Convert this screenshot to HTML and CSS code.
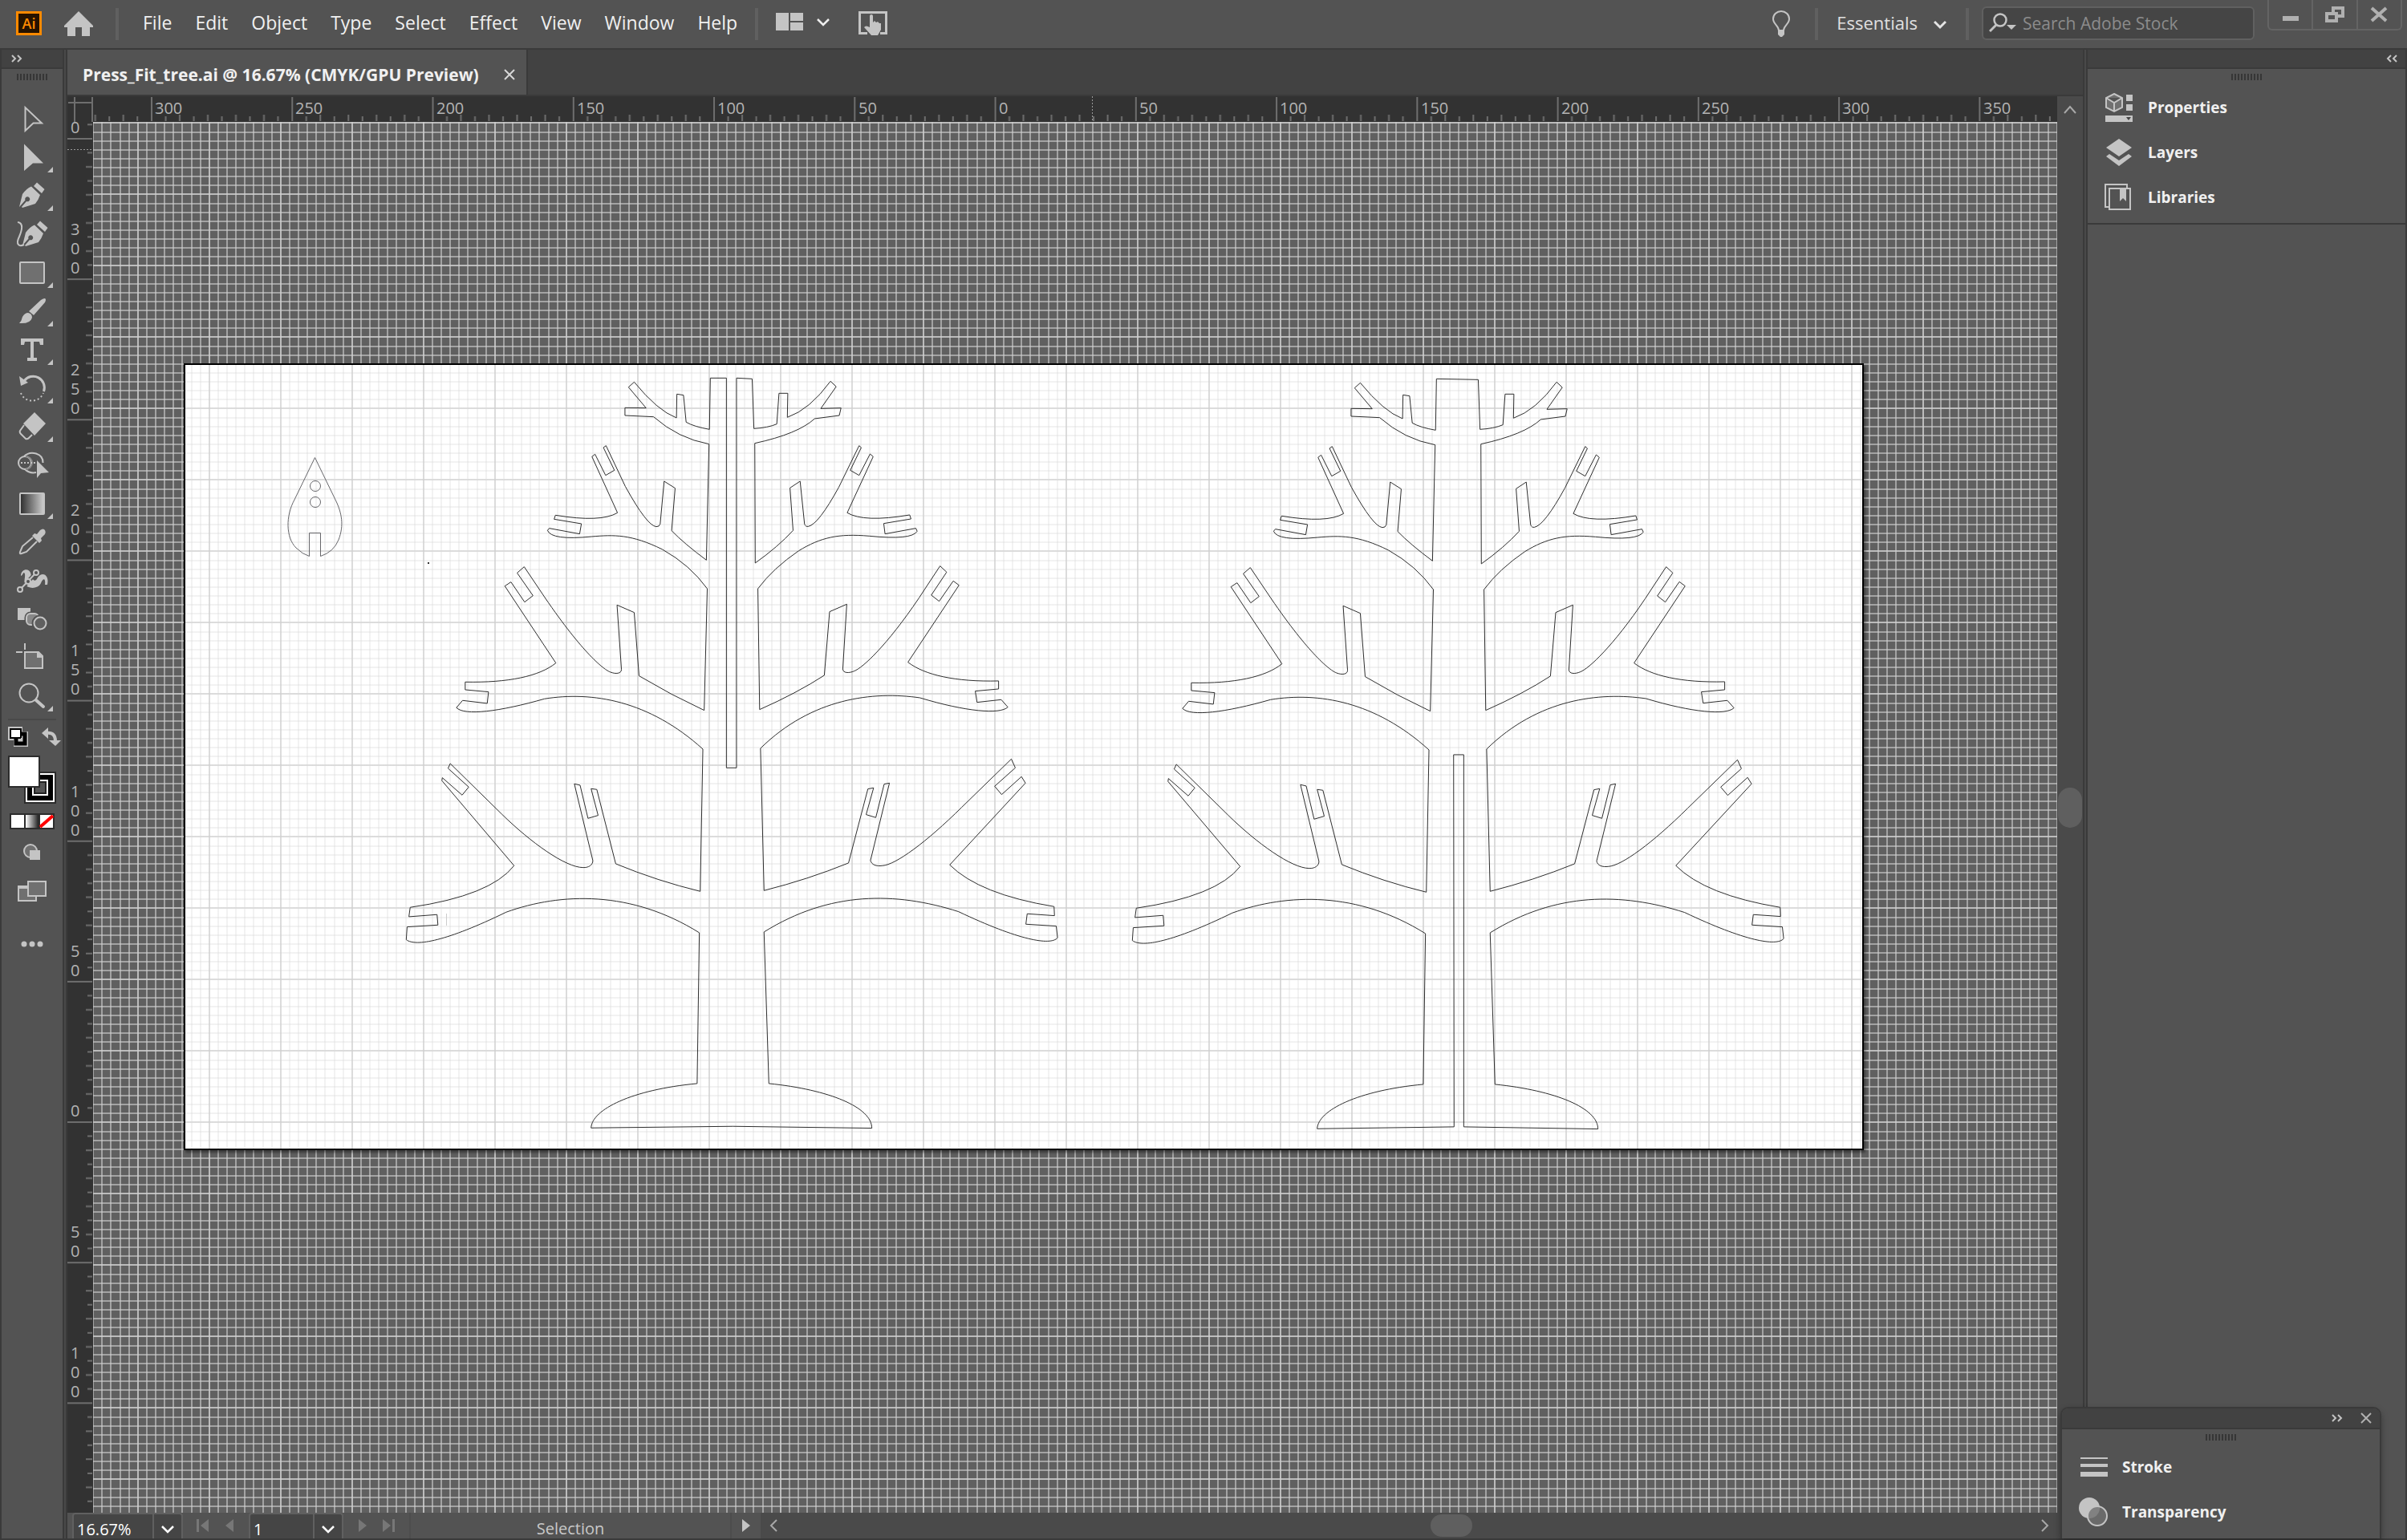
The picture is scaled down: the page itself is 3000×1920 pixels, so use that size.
FILE: index.html
```html
<!DOCTYPE html>
<html lang="en">
<head>
<meta charset="utf-8">
<title>Press_Fit_tree.ai</title>
<link rel="stylesheet" href="styles.css">
</head>
<body>
<header class="appbar">
  <div class="logo">Ai</div>
  <button class="plain home" aria-label="Home"><svg width="36" height="32" viewBox="0 0 36 32"><path fill="#c4c4c4" d="M18 0 36 18V20H32V31H22V20H14V31H4V20H0V18Z"/></svg></button>
  <span class="divider"></span>
  <nav class="menu">
    <button class="plain">File</button><button class="plain">Edit</button><button class="plain">Object</button><button class="plain">Type</button><button class="plain">Select</button><button class="plain">Effect</button><button class="plain">View</button><button class="plain">Window</button><button class="plain">Help</button>
  </nav>
  <span class="divider"></span>
  <button class="plain arrange" aria-label="Arrange documents"><svg width="68" height="24" viewBox="0 0 68 24"><path fill="#c4c4c4" d="M0 1H16V23H0ZM18 1H34V11H18ZM18 13H34V23H18Z"/><path fill="none" stroke="#eee" stroke-width="2.500" d="M52 9 59 16 66 9"/></svg></button>
  <button class="plain touch" aria-label="Touch workspace"><svg width="36" height="32" viewBox="0 0 36 32"><path fill="none" stroke="#c4c4c4" stroke-width="3" d="M11 27.500H1.500V1.500H34.500V27.500H27"/><path fill="#c4c4c4" d="M14 6Q14 4 16 4T18 6V14L20 12 22 14 24 13 26 15 28 15V23L24 30H16L7 20Q9 17 14 20Z"/></svg></button>
  <span class="spacer"></span>
  <button class="plain learn" aria-label="Learn"><svg width="24" height="34" viewBox="0 0 24 34"><path fill="none" stroke="#c4c4c4" stroke-width="2" d="M9 25C9 19 2 17 2 10.500A10 9.500 0 0 1 22 10.500C22 17 15 19 15 25Z"/><path fill="#c4c4c4" d="M8 24H16V30L13 33H11L8 30Z"/></svg></button>
  <span class="divider"></span>
  <button class="plain workspace">Essentials<svg width="16" height="12" viewBox="0 0 16 12"><path fill="none" stroke="#e4e4e4" stroke-width="3" d="M1 2 8 9 15 2"/></svg></button>
  <span class="divider"></span>
  <label class="search">
    <svg width="34" height="26" viewBox="0 0 34 26"><circle cx="14" cy="9" r="7.500" fill="none" stroke="#c4c4c4" stroke-width="2.500"/><path d="M9 15 1 23" stroke="#c4c4c4" stroke-width="3"/><path fill="#c4c4c4" d="M22 15H34L28 21Z"/></svg>
    <input type="text" placeholder="Search Adobe Stock" aria-label="Search Adobe Stock">
  </label>
  <div class="winbtns">
    <button class="plain" aria-label="Minimize"><svg width="24" height="20" viewBox="0 0 24 20"><path fill="#b0b0b0" d="M2 12H22V18H2Z"/></svg></button>
    <button class="plain" aria-label="Restore"><svg width="24" height="20" viewBox="0 0 24 20"><path fill="none" stroke="#b0b0b0" stroke-width="4" d="M2 9H14V18H2ZM10 8V2H22V12H15"/></svg></button>
    <button class="plain" aria-label="Close"><svg width="24" height="20" viewBox="0 0 24 20"><path fill="none" stroke="#b0b0b0" stroke-width="4" d="M3 2 21 18M21 2 3 18"/></svg></button>
  </div>
</header>

<div class="work">
  <aside class="toolbar">
    <button class="plain dockhead" aria-label="Expand toolbar"><svg width="14" height="10" viewBox="0 0 14 10"><path fill="none" stroke="#c4c4c4" stroke-width="2" d="M1 1 5 5 1 9M8 1 12 5 8 9"/></svg></button>
    <div class="tools">
      <span class="grip"></span>
      <div class="toollist">
      <button class="plain tool" aria-label="Selection"><svg viewBox="0 0 76 48"><path fill="none" stroke="#c4c4c4" stroke-width="2" d="M29.500 10V39L39.500 29.500H50Z"/></svg></button>
      <button class="plain tool" aria-label="Direct selection"><svg viewBox="0 0 76 48"><path class="f" d="M28 7.500V41L39 31.500H52ZM64 36V43H57Z"/></svg></button>
      <button class="plain tool" aria-label="Pen"><svg viewBox="0 0 76 48"><path class="f" d="M22 38 26 22Q31 15 37 12.500L48 23Q46 29 42 34L26 39 25 38 31 31A3 3 0 1 0 29.500 29.500L23 37ZM40 12 44 7.500 53.500 16 50 21ZM64 36V43H57Z"/></svg></button>
      <button class="plain tool" aria-label="Curvature"><svg viewBox="0 0 76 48"><path class="f" d="M26 38 30 22Q35 15 41 12.500L52 23Q50 29 46 34L30 39 29 38 35 31A3 3 0 1 0 33.500 29.500L27 37ZM44 12 48 7.500 57.500 16 54 21Z"/><path fill="none" stroke="#c4c4c4" stroke-width="2" d="M20 9C28 10 25 20 22 27 17 37 22 40 28 37"/></svg></button>
      <button class="plain tool" aria-label="Rectangle"><svg viewBox="0 0 76 48"><rect x="23" y="11" width="30" height="26" rx="1" fill="#707070" stroke="#c4c4c4" stroke-width="2"/><path class="f" d="M64 36V43H57Z"/></svg></button>
      <button class="plain tool" aria-label="Paintbrush"><svg viewBox="0 0 76 48"><path class="f" d="M54 8Q56 9 54 13L40 29 34 24 49 10Q52 8 54 8ZM33 26Q38 27 38 32 36 40 22 39 25 36 26 31 29 26 33 26ZM64 36V43H57Z"/></svg></button>
      <button class="plain tool" aria-label="Type"><svg viewBox="0 0 76 48"><path class="f" d="M24 10H52V18H48L47 14H40V34H44V38H32V34H36V14H29L28 18H24ZM64 36V43H57Z"/></svg></button>
      <button class="plain tool" aria-label="Rotate"><svg viewBox="0 0 76 48"><path fill="none" stroke="#c4c4c4" stroke-width="3" d="M28 15A14 14 0 0 1 52.500 28"/><path class="f" d="M22 9 24 21 33 17ZM64 36V43H57Z"/><path fill="none" stroke="#c4c4c4" stroke-width="2" stroke-dasharray="2 3" d="M24 30A15 15 0 0 0 52 30"/></svg></button>
      <button class="plain tool" aria-label="Eraser"><svg viewBox="0 0 76 48"><path class="f" d="M41 6 55 20 41 35 27 20ZM64 36V43H57Z"/><path fill="none" stroke="#c4c4c4" stroke-width="2" d="M28 22 23 29Q22 31 24 33L30 39Q32 40 34 38L38 34"/></svg></button>
      <button class="plain tool" aria-label="Shape builder"><svg viewBox="0 0 76 48"><circle cx="29" cy="21" r="8" fill="none" stroke="#c4c4c4" stroke-width="2"/><path fill="none" stroke="#c4c4c4" stroke-width="2" d="M28 13C36 5 52 9 51.500 21M29 29C33 33 38 34 43 33"/><path fill="none" stroke="#888" stroke-width="2" d="M30 13A8 8 0 0 1 30 29"/><path stroke="#c4c4c4" stroke-width="2" stroke-dasharray="2 2" d="M24 21H42"/><path class="f" d="M44 18V40L49 34 59 33Z"/></svg></button>
      <button class="plain tool" aria-label="Gradient"><svg viewBox="0 0 76 48"><defs><linearGradient id="g1"><stop offset="0" stop-color="#2c2c2c"/><stop offset="1" stop-color="#d0d0d0"/></linearGradient></defs><rect x="23" y="11" width="30" height="26" rx="1" fill="url(#g1)" stroke="#c4c4c4" stroke-width="2"/><path class="f" d="M64 36V43H57Z"/></svg></button>
      <button class="plain tool" aria-label="Eyedropper"><svg viewBox="0 0 76 48"><path class="f" d="M48 9Q52 6 54 9 56 13 52 16L49 19 50 22 47 25 38 16 41 13 44 14Z"/><path fill="none" stroke="#c4c4c4" stroke-width="2" d="M39 18 26 29 23 36Q22 39 25 38L31 36 44 23"/></svg></button>
      <button class="plain tool" aria-label="Puppet warp"><svg viewBox="0 0 76 48"><path class="f" d="M24 18C24 9 34 8 36 14 38 22 41 28 45 20 50 12 60 16 57 29H54C55 21 52 20 49 27 45 35 33 34 29 29 27 25 31 16 28 14 26 14 27 17 24 18Z"/><path stroke="#535353" stroke-width="5" d="M25 34 42 15"/><path stroke="#c4c4c4" stroke-width="2" d="M24 34 42 15"/><g fill="#535353" stroke="#c4c4c4" stroke-width="2"><circle cx="23" cy="35" r="3"/><circle cx="33" cy="25" r="3"/><circle cx="43" cy="14" r="3"/></g></svg></button>
      <button class="plain tool" aria-label="Blend"><svg viewBox="0 0 76 48"><path class="f" d="M20 10H36V25H20Z"/><rect x="31" y="17" width="15" height="14" rx="5" fill="#888" stroke="#535353" stroke-width="5"/><rect x="31" y="17" width="15" height="14" rx="5" fill="#888" stroke="#c4c4c4" stroke-width="2"/><circle cx="48" cy="29" r="8" fill="#707070" stroke="#535353" stroke-width="5"/><circle cx="48" cy="29" r="7.500" fill="#606060" stroke="#c4c4c4" stroke-width="2"/></svg></button>
      <button class="plain tool" aria-label="Artboard"><svg viewBox="0 0 76 48"><path fill="none" stroke="#c4c4c4" stroke-width="2" d="M29 6V14M18 17H26"/><path fill="#707070" stroke="#c4c4c4" stroke-width="2" d="M29 17H46L51 22V37H29Z"/><path class="f" d="M44 16V24H52Z"/></svg></button>
      <button class="plain tool" aria-label="Zoom"><svg viewBox="0 0 76 48"><circle cx="34" cy="20" r="11.500" fill="none" stroke="#c4c4c4" stroke-width="2"/><path stroke="#c4c4c4" stroke-width="4" stroke-linecap="round" d="M43 29 52 37"/><path class="f" d="M64 36V43H57Z"/></svg></button>
      </div>
      <div class="swaprow">
        <button class="plain" aria-label="Default fill and stroke"><svg width="26" height="26" viewBox="0 0 26 26"><path fill="#c4c4c4" d="M0 0H18V6H25V25H7V17H0Z"/><path d="M3 3H16V14H3Z" fill="#fff" stroke="#000" stroke-width="2"/><path d="M17 9H21V21H10V15" fill="none" stroke="#000" stroke-width="5"/><path d="M17 14V17H14" fill="none" stroke="#c4c4c4" stroke-width="2"/></svg></button>
        <button class="plain" aria-label="Swap fill and stroke"><svg width="24" height="24" viewBox="0 0 24 24"><path d="M6 7C14 6 17 10 17 17" fill="none" stroke="#c4c4c4" stroke-width="4"/><path class="f" d="M0 7 8 0V14ZM9 16H24L17 23Z"/></svg></button>
      </div>
      <button class="plain fillstroke" aria-label="Fill and stroke"><svg width="60" height="60" viewBox="0 0 60 60"><path d="M20 20H60V60H20Z" fill="#2c2c2c"/><path d="M23 23H57V57H23Z" fill="#000" stroke="#fff" stroke-width="2"/><path d="M31 31H49V49H31Z" fill="#535353" stroke="#fff" stroke-width="2"/><path d="M33 33H47V47H33Z" fill="#535353" stroke="#222" stroke-width="2"/><path d="M1 1H39V39H1Z" fill="#fff" stroke="#2c2c2c" stroke-width="2"/></svg></button>
      <button class="plain modes" aria-label="Color, gradient, none"><svg width="56" height="20" viewBox="0 0 56 20"><defs><linearGradient id="g2"><stop offset="0" stop-color="#fff"/><stop offset="1" stop-color="#222"/></linearGradient></defs><path fill="#2c2c2c" d="M0 0H56V20H0Z"/><path fill="#fff" d="M2 2H18V18H2ZM38 2H54V18H38Z"/><path fill="url(#g2)" d="M20 2H36V18H20Z"/><path stroke="#f00" stroke-width="4" d="M38 17 54 3"/></svg></button>
      <button class="plain drawmode" aria-label="Draw normal"><svg width="22" height="20" viewBox="0 0 22 20"><circle cx="9" cy="9" r="8" fill="#707070" stroke="#c4c4c4" stroke-width="2"/><path class="f" d="M8 8H21V20H8Z"/></svg></button>
      <button class="plain screenmode" aria-label="Screen mode"><svg width="36" height="26" viewBox="0 0 36 26"><path d="M1 7H23V25H1Z" fill="#707070" stroke="#c4c4c4" stroke-width="2"/><path d="M1 6H12V10H1Z" class="f"/><path d="M13 1H35V19H13Z" fill="#707070" stroke="#c4c4c4" stroke-width="2"/></svg></button>
      <button class="plain more" aria-label="Edit toolbar"><svg width="28" height="8" viewBox="0 0 28 8"><circle class="f" cx="4" cy="4" r="3.500"/><circle class="f" cx="14" cy="4" r="3.500"/><circle class="f" cx="24" cy="4" r="3.500"/></svg></button>
    </div>
  </aside>

  <span class="splitter"></span>

  <main class="document">
    <div class="tabs">
      <div class="tab"><span>Press_Fit_tree.ai @ 16.67% (CMYK/GPU Preview)</span><button class="plain" aria-label="Close tab"><svg width="14" height="14" viewBox="0 0 14 14"><path stroke="#d8d8d8" stroke-width="2" d="M1 1 13 13M13 1 1 13"/></svg></button></div>
    </div>
    <div class="view">
      <svg class="corner" viewBox="0 0 32 32"><path stroke="#6e6e6e" stroke-width="2" d="M9 1V32M1 8H32M31 1V32"/></svg>
      <svg class="hruler">
        <defs><pattern id="ht" patternUnits="userSpaceOnUse" x="72" y="0" width="175.260" height="32"><path fill="#6e6e6e" d="M0 1H2V31H0ZM17.500 25H19.500V31H17.500ZM35 23H37V31H35ZM52.500 25H54.500V31H52.500ZM70 23H72V31H70ZM87.500 25H89.500V31H87.500ZM105 23H107V31H105ZM122.500 25H124.500V31H122.500ZM140 23H142V31H140ZM157.500 25H159.500V31H157.500Z"/></pattern></defs>
        <rect width="100%" height="32" fill="url(#ht)"/>
        <path stroke="#999" stroke-dasharray="2 2" d="M1245.500 0V32"/>
        <g class="tick"><text x="77" y="22">300</text><text x="252" y="22">250</text><text x="428" y="22">200</text><text x="603" y="22">150</text><text x="778" y="22">100</text><text x="954" y="22">50</text><text x="1129" y="22">0</text><text x="1304" y="22">50</text><text x="1479" y="22">100</text><text x="1655" y="22">150</text><text x="1830" y="22">200</text><text x="2005" y="22">250</text><text x="2180" y="22">300</text><text x="2356" y="22">350</text></g>
      </svg>
      <svg class="vruler">
        <defs><pattern id="vt" patternUnits="userSpaceOnUse" x="0" y="20" width="32" height="175.150"><path fill="#6e6e6e" d="M0 0H31V2H0ZM25 17.500H31V19.500H25ZM23 35H31V37H23ZM25 52.500H31V54.500H25ZM23 70H31V72H23ZM25 87.500H31V89.500H25ZM23 105H31V107H23ZM25 122.500H31V124.500H25ZM23 140H31V142H23ZM25 157.500H31V159.500H25Z"/></pattern></defs>
        <rect width="32" height="100%" fill="url(#vt)"/>
        <path stroke="#999" stroke-dasharray="2 2" d="M0 34.500H31"/>
        <g class="tick"><text x="4" y="14">0</text>
        <text><tspan x="4" y="141">3</tspan><tspan x="4" y="165">0</tspan><tspan x="4" y="189">0</tspan></text>
        <text><tspan x="4" y="316">2</tspan><tspan x="4" y="340">5</tspan><tspan x="4" y="364">0</tspan></text>
        <text><tspan x="4" y="491">2</tspan><tspan x="4" y="515">0</tspan><tspan x="4" y="539">0</tspan></text>
        <text><tspan x="4" y="666">1</tspan><tspan x="4" y="690">5</tspan><tspan x="4" y="714">0</tspan></text>
        <text><tspan x="4" y="842">1</tspan><tspan x="4" y="866">0</tspan><tspan x="4" y="890">0</tspan></text>
        <text><tspan x="4" y="1041">5</tspan><tspan x="4" y="1065">0</tspan></text>
        <text x="4" y="1240">0</text>
        <text><tspan x="4" y="1391">5</tspan><tspan x="4" y="1415">0</tspan></text>
        <text><tspan x="4" y="1542">1</tspan><tspan x="4" y="1566">0</tspan><tspan x="4" y="1590">0</tspan></text></g>
      </svg>
      <div class="canvas">
        <div class="artboard">
          <svg class="art" viewBox="0 0 2090 977">
            <defs>
              <g id="tree">
                <path d="M739 94 737 286Q702 276 684 259L678 158 663 154 662 243Q619 216 566 109L553 128 593 206 545 205V234L610 239Q666 320 736 341L730 775Q680 714 651 665L659 506 634 480 625 640Q623 651 616 650 595 646 546 500L502 347 496 354 521 439 501 458 477 379 470 388 528 598Q490 635 387 607L384 622 446 639 442 677 373 656 369 664Q378 702 470 687C520 680 560 678 630 735Q693 793 732 882L725 1337Q650 1280 577 1208L566 971 527 943 537 1184C537 1200 524 1202 512 1194 498 1186 450 1125 363 915L316 800 300 823 336 908 317 932 286 857 272 872 388 1160C350 1210 280 1234 182 1231V1260L235 1268 232 1311 176 1300 162 1327C180 1358 260 1342 362 1294 470 1265 600 1300 722 1482L716 2014Q620 1976 524 1911L481 1633 468 1630 484 1730 461 1741 443 1617 430 1612 472 1899C472 1916 462 1926 450 1925 410 1925 330 1830 265 1725L148 1536 143 1554 190 1624 175 1654 130 1589 129 1600 293 1918Q240 2030 57 2074L54 2109 118 2101 120 2140 50 2147 48 2195C70 2222 140 2200 275 2092 400 2018 560 2010 714 2169L709 2733C560 2756 470 2830 468 2899"/>
                <path d="M834 97 838 283Q870 280 890 266L895 151H915L914 241Q965 212 1012 106L1025 126 990 208 1036 206 1032 234 976 246Q938 303 840 338L841 786Q893 725 927 664L920 505 943 480 953 640Q955 651 962 649 985 640 1031 502L1077 347 1082 354 1057 439 1077 458 1102 378 1109 388 1050 598Q1088 635 1192 606L1195 621 1133 638 1136 677 1206 656 1209 667Q1197 701 1100 685C1030 675 990 690 940 740Q882 805 847 882L851 1334Q935 1273 998 1206L1010 968 1049 940 1040 1182C1040 1198 1054 1199 1066 1190 1085 1178 1140 1095 1213 917L1261 797 1276 820 1241 906 1259 929 1291 853 1304 869 1188 1157C1226 1205 1296 1231 1394 1227V1257L1341 1265 1345 1307 1400 1297 1415 1325C1397 1353 1320 1342 1215 1290 1110 1265 970 1290 853 1479L861 2011Q960 1970 1053 1908L1097 1631 1110 1627 1093 1727 1115 1738 1134 1613 1146 1609 1103 1898C1105 1915 1116 1921 1130 1918 1160 1915 1230 1830 1310 1700L1423 1519 1432 1552 1385 1621 1401 1652 1446 1585 1455 1609 1283 1915Q1350 2025 1520 2071L1521 2105 1459 2098 1456 2137 1525 2144 1528 2188C1512 2218 1440 2197 1303 2090 1160 2015 1010 2013 861 2166L872 2733C1010 2756 1106 2822 1106 2900"/>
              </g>
            </defs>
            <g class="cut" transform="translate(249 -15) scale(.5485 .3333)">
              <use href="#tree"/>
              <path d="M739 94H775.500V1552H798.500V94L834 97M468 2899 790 2893 1106 2900"/>
            </g>
            <g class="cut" transform="translate(1154 -14) scale(.5485 .3333)">
              <use href="#tree"/>
              <path d="M739 94 834 97M468 2899 779 2892 778 1500H801V2892L1106 2900"/>
            </g>
            <g class="leaf">
              <path d="M161.500 115.500 136 168C125 188 125 215 138 228Q146 236 154.500 238.500V209.500H168.500V238.500Q185 233 191 218C198 200 195 184 187 168Z"/>
              <circle cx="162" cy="151" r="6.500"/><circle cx="162" cy="171" r="6.500"/>
            </g>
            <path fill="#333" d="M302 246H304V248H302Z"/>
            <path stroke="#ccc" d="M325.500 684V699"/>
          </svg>
        </div>
      </div>
      <div class="vscroll"><svg width="18" height="12" viewBox="0 0 18 12"><path fill="none" stroke="#a8a8a8" stroke-width="2" d="M2 10 9 2 16 10"/></svg><span class="vthumb"></span></div>
    </div>
    <footer class="status">
      <div class="combo zoomval"><input type="text" value="16.67%" aria-label="Zoom"><button class="plain" aria-label="Zoom levels"><svg width="16" height="10" viewBox="0 0 16 10"><path fill="none" stroke="#fff" stroke-width="2.500" d="M1 1 8 8 15 1"/></svg></button></div>
      <button class="plain nav" aria-label="First artboard"><svg width="16" height="16" viewBox="0 0 16 16"><path fill="#777" d="M0 0H3V16H0ZM15 0V16L5 8Z"/></svg></button>
      <button class="plain nav" aria-label="Previous artboard"><svg width="16" height="16" viewBox="0 0 16 16"><path fill="#777" d="M12 0V16L2 8Z"/></svg></button>
      <div class="combo boardval"><input type="text" value="1" aria-label="Artboard"><button class="plain" aria-label="Artboard list"><svg width="16" height="10" viewBox="0 0 16 10"><path fill="none" stroke="#fff" stroke-width="2.500" d="M1 1 8 8 15 1"/></svg></button></div>
      <button class="plain nav next" aria-label="Next artboard"><svg width="16" height="16" viewBox="0 0 16 16"><path fill="#777" d="M4 0V16L14 8Z"/></svg></button>
      <button class="plain nav" aria-label="Last artboard"><svg width="16" height="16" viewBox="0 0 16 16"><path fill="#777" d="M0 0V16L10 8ZM12 0H15V16H12Z"/></svg></button>
      <div class="curtool">Selection</div>
      <button class="plain popup" aria-label="Status options"><svg width="12" height="16" viewBox="0 0 12 16"><path class="f" d="M1 0V16L11 8Z"/></svg></button>
      <div class="hscroll">
        <svg width="12" height="16" viewBox="0 0 12 16"><path fill="none" stroke="#a8a8a8" stroke-width="2" d="M9 1 2 8 9 15"/></svg>
        <span class="hthumb"></span>
        <svg width="12" height="16" viewBox="0 0 12 16"><path fill="none" stroke="#a8a8a8" stroke-width="2" d="M3 1 10 8 3 15"/></svg>
      </div>
    </footer>
  </main>

  <span class="splitter"></span>

  <aside class="dock">
    <button class="plain dockhead right" aria-label="Collapse panels"><svg width="14" height="10" viewBox="0 0 14 10"><path fill="none" stroke="#c4c4c4" stroke-width="2" d="M6 1 2 5 6 9M13 1 9 5 13 9"/></svg></button>
    <div class="panelset">
      <span class="grip"></span>
      <button class="plain panelbtn"><svg width="36" height="36" viewBox="0 0 36 36"><path fill="#707070" stroke="#c4c4c4" stroke-width="2" d="M12 1 22 6V18L12 23 2 18V6ZM2 6 12 12 22 6M12 12V23"/><path class="f" d="M27 2H35V10H27ZM27 14H35V22H27ZM1 28H35V36H1Z"/><path fill="#444" d="M27 30H33L30 34Z"/></svg>Properties</button>
      <button class="plain panelbtn"><svg width="36" height="36" viewBox="0 0 36 36"><path class="f" d="M18 1 34 12 18 23 2 12ZM6 20 18 28 30 20 34 23 18 35 2 23Z"/></svg>Layers</button>
      <button class="plain panelbtn"><svg width="36" height="36" viewBox="0 0 36 36"><path fill="none" stroke="#c4c4c4" stroke-width="2" d="M5 30H1V2H28V6M6 7H32V33H6Z"/><path class="f" d="M19 6H27V23L23 19 19 23Z"/></svg>Libraries</button>
    </div>
    <div class="dockrest"></div>
  </aside>
</div>

<section class="palette">
  <div class="palhead">
    <button class="plain" aria-label="Expand"><svg width="14" height="10" viewBox="0 0 14 10"><path fill="none" stroke="#c4c4c4" stroke-width="2" d="M1 1 5 5 1 9M8 1 12 5 8 9"/></svg></button>
    <button class="plain" aria-label="Close panel"><svg width="14" height="14" viewBox="0 0 14 14"><path stroke="#b0b0b0" stroke-width="2" d="M1 1 13 13M13 1 1 13"/></svg></button>
  </div>
  <div class="palbody">
    <span class="grip"></span>
    <button class="plain panelbtn"><svg width="36" height="36" viewBox="0 0 36 36"><path class="f" d="M2 6H36V8H2ZM2 14H36V18H2ZM2 24H36V30H2Z"/></svg>Stroke</button>
    <button class="plain panelbtn"><svg width="36" height="36" viewBox="0 0 36 36"><circle class="f" cx="13" cy="13" r="13"/><circle cx="23" cy="23" r="12" fill="#707070" fill-opacity=".8" stroke="#c4c4c4" stroke-width="2"/></svg>Transparency</button>
  </div>
</section>
</body>
</html>
```
FILE: styles.css
```css
* { box-sizing: border-box; }

body {
  margin: 0;
  height: 100vh;
  display: flex;
  flex-direction: column;
  overflow: hidden;
  position: relative;
  background: #3a3a3a;
  color: #f0f0f0;
  font-family: "Open Sans", "Noto Sans", sans-serif;
  font-size: 22px;
}

svg { display: block; flex: none; }
.f { fill: #c4c4c4; }

.plain {
  margin: 0;
  padding: 0;
  border: 0;
  background: none;
  color: inherit;
  font: inherit;
  display: flex;
  align-items: center;
  justify-content: center;
}

input {
  min-width: 0;
  border: 0;
  padding: 0;
  background: none;
  color: #fff;
  font: inherit;
  outline: 0;
}

/* application bar */
.appbar {
  flex: none;
  height: 60px;
  display: flex;
  align-items: center;
  background: #535353;
  padding: 0 6px 0 20px;
}
.logo {
  width: 32px;
  height: 30px;
  margin-bottom: 2px;
  border: 3px solid #ff8a00;
  background: #261300;
  color: #ff8a00;
  font-size: 18px;
  font-weight: 600;
  line-height: 24px;
  text-align: center;
}
.home { margin: 0 28px 0 28px; }
.divider { width: 4px; height: 40px; background: #606060; }
.menu { display: flex; gap: 29px; margin: 0 22px 4px 30px; font-size: 23px; }
.arrange { margin: 0 35px 6px 22px; }
.spacer { flex: 1; }
.learn { margin: 0 30px 0 0; }
.workspace { gap: 20px; margin: 0 24px 4px 23px; color: #e0e0e0; }
.workspace svg { margin-top: 6px; }
.search {
  width: 340px;
  height: 42px;
  margin: 0 16px 2px;
  padding: 0 7px;
  display: flex;
  align-items: center;
  gap: 8px;
  border: 2px solid #606060;
  border-radius: 6px;
  background: #454545;
}
.search input { flex: 1; font-size: 21px; }
.search input::placeholder { color: #8c8c8c; opacity: 1; }
.winbtns {
  align-self: flex-start;
  display: flex;
  width: 168px;
  height: 38px;
  border: 2px solid #646464;
  border-top: 0;
  border-radius: 0 0 6px 6px;
}
.winbtns button { flex: 1; }
.winbtns button + button { border-left: 2px solid #646464; }

/* main area */
.work { flex: 1; min-height: 0; display: flex; padding: 2px; }
.splitter {
  width: 6px;
  flex: none;
  background: #494949;
  border: 2px solid #3a3a3a;
  border-width: 0 2px;
}
.dockhead {
  width: 100%;
  height: 22px;
  background: #424242;
  justify-content: flex-start;
  padding: 0 12px;
}
.dockhead.right { justify-content: flex-end; padding: 0 10px; }
.grip {
  width: 38px;
  height: 8px;
  margin: 6px auto 0;
  flex: none;
  background: linear-gradient(to right, #363636 50%, transparent 50%) 0 0 / 4px 8px;
}

.toolbar { width: 76px; flex: none; display: flex; flex-direction: column; gap: 2px; }
.tools { flex: 1; display: flex; flex-direction: column; align-items: center; background: #535353; }
.toollist { margin-top: 24px; }
.tool svg { width: 76px; height: 48px; }
.swaprow {
  width: 60px;
  height: 44px;
  margin-top: 4px;
  border-top: 2px solid #494949;
  display: flex;
  align-items: center;
  justify-content: space-between;
  gap: 16px;
}
.fillstroke { margin-top: 2px; }
.modes { margin-top: 12px; }
.drawmode { margin-top: 18px; }
.screenmode { margin-top: 26px; }
.more { margin-top: 49px; }

/* document window */
.document { flex: 1; min-width: 0; display: flex; flex-direction: column; }
.tabs { height: 58px; flex: none; display: flex; background: #424242; border-bottom: 2px solid #3a3a3a; }
.tab {
  display: flex;
  align-items: center;
  gap: 31px;
  padding: 5px 14px 0 19px;
  background: #535353;
  border-right: 2px solid #3a3a3a;
  font-size: 21px;
  font-weight: 700;
}
.view { flex: 1; min-height: 0; display: grid; grid-template: 32px 1fr / 32px 1fr 32px; background: #323232; }
.corner { width: 32px; height: 32px; }
.hruler { width: 100%; height: 32px; }
.vruler { width: 32px; height: 100%; overflow: visible; }
.tick { fill: #b4b4b4; font-size: 20px; }
.vscroll {
  grid-area: 1 / 3 / 3 / 4;
  display: flex;
  flex-direction: column;
  align-items: center;
  padding-top: 11px;
  background: #4a4a4a;
}
.vthumb { width: 30px; height: 50px; margin-top: 839px; border-radius: 15px; background: #5f5f5f; }

.canvas, .artboard {
  background-image:
    linear-gradient(to right, var(--major) 0 2px, transparent 2px 11px, var(--minor) 11px 13px, transparent 13px 22px, var(--minor) 22px 24px, transparent 24px 33px, var(--minor) 33px 35px, transparent 35px 44px, var(--minor) 44px 46px, transparent 46px 55px, var(--minor) 55px 57px, transparent 57px 67px, var(--minor) 67px 69px, transparent 69px 78px, var(--minor) 78px 80px, transparent 80px),
    linear-gradient(to bottom, var(--major) 0 2px, transparent 2px 12px, var(--minor) 12px 14px, transparent 14px 23px, var(--minor) 23px 25px, transparent 25px 34px, var(--minor) 34px 36px, transparent 36px 45px, var(--minor) 45px 47px, transparent 47px 56px, var(--minor) 56px 58px, transparent 58px 67px, var(--minor) 67px 69px, transparent 69px 78px, var(--minor) 78px 80px, transparent 80px);
  background-size: 89px 89px;
}
.canvas {
  --major: rgba(208, 208, 208, .82);
  --minor: rgba(208, 208, 208, .6);
  position: relative;
  overflow: hidden;
  background-color: #606060;
  background-position: 55px 0;
}
/* the artboard is an object placed on the free canvas */
.artboard {
  --major: rgba(208, 208, 208, .75);
  --minor: rgba(216, 216, 216, .33);
  position: absolute;
  left: 113px;
  top: 301px;
  width: 2094px;
  height: 981px;
  border: 2px solid #000;
  background-color: #fff;
  background-position: 29px 53px;
  box-shadow: 2px 3px 3px rgba(0, 0, 0, .4);
}
.art { width: 100%; height: 100%; }
.cut { fill: none; stroke: #2e2e2e; }
.cut path, #tree path { vector-effect: non-scaling-stroke; stroke-width: 1px; }
.leaf { fill: none; stroke: #66666a; stroke-width: 1; }

/* status bar */
.status {
  height: 32px;
  flex: none;
  display: flex;
  align-items: stretch;
  padding-left: 6px;
  background: #535353;
  font-size: 20px;
}
.combo { display: flex; border: 2px solid #606060; border-bottom: 0; border-radius: 4px 4px 0 0; background: #454545; }
.combo input { flex: 1; padding: 6px 0 0 4px; }
.combo button { width: 36px; padding-top: 8px; border-left: 2px solid #606060; }
.zoomval { width: 138px; margin-right: 8px; }
.boardval { width: 118px; margin-left: 6px; }
.nav { width: 34px; }
.next { margin-left: 6px; }
.curtool {
  width: 402px;
  margin-left: 8px;
  padding-top: 6px;
  border: 2px solid #4d4d4d;
  border-width: 0 2px;
  line-height: 28px;
  text-align: center;
  color: #c8c8c8;
}
.popup { width: 36px; }
.hscroll { flex: 1; display: flex; align-items: center; padding: 0 42px 0 11px; background: #4a4a4a; }
.hthumb { width: 52px; height: 28px; margin: 0 auto 0 812px; border-radius: 14px; background: #5f5f5f; }

/* right dock */
.dock { width: 396px; flex: none; display: flex; flex-direction: column; gap: 2px; }
.panelset { display: flex; flex-direction: column; height: 192px; background: #535353; }
.panelbtn {
  height: 56px;
  flex: none;
  justify-content: flex-start;
  gap: 18px;
  padding-left: 21px;
  font-size: 19px;
  font-weight: 700;
}
.panelset .grip { margin-bottom: 6px; }
.dockrest { flex: 1; background: #535353; }

/* floating palette over the dock */
.palette {
  position: absolute;
  right: 32px;
  bottom: 2px;
  width: 400px;
  border: 2px solid #3a3a3a;
  border-bottom: 0;
  border-radius: 10px 10px 0 0;
  background: #535353;
  box-shadow: 0 4px 8px rgba(0, 0, 0, .3);
}
.palhead {
  height: 26px;
  display: flex;
  align-items: center;
  justify-content: flex-end;
  gap: 22px;
  padding-right: 10px;
  border-bottom: 2px solid #3a3a3a;
  border-radius: 8px 8px 0 0;
  background: #424242;
}
.palbody { display: flex; flex-direction: column; height: 136px; overflow: hidden; }
.palbody .grip { margin-bottom: 5px; }
```
